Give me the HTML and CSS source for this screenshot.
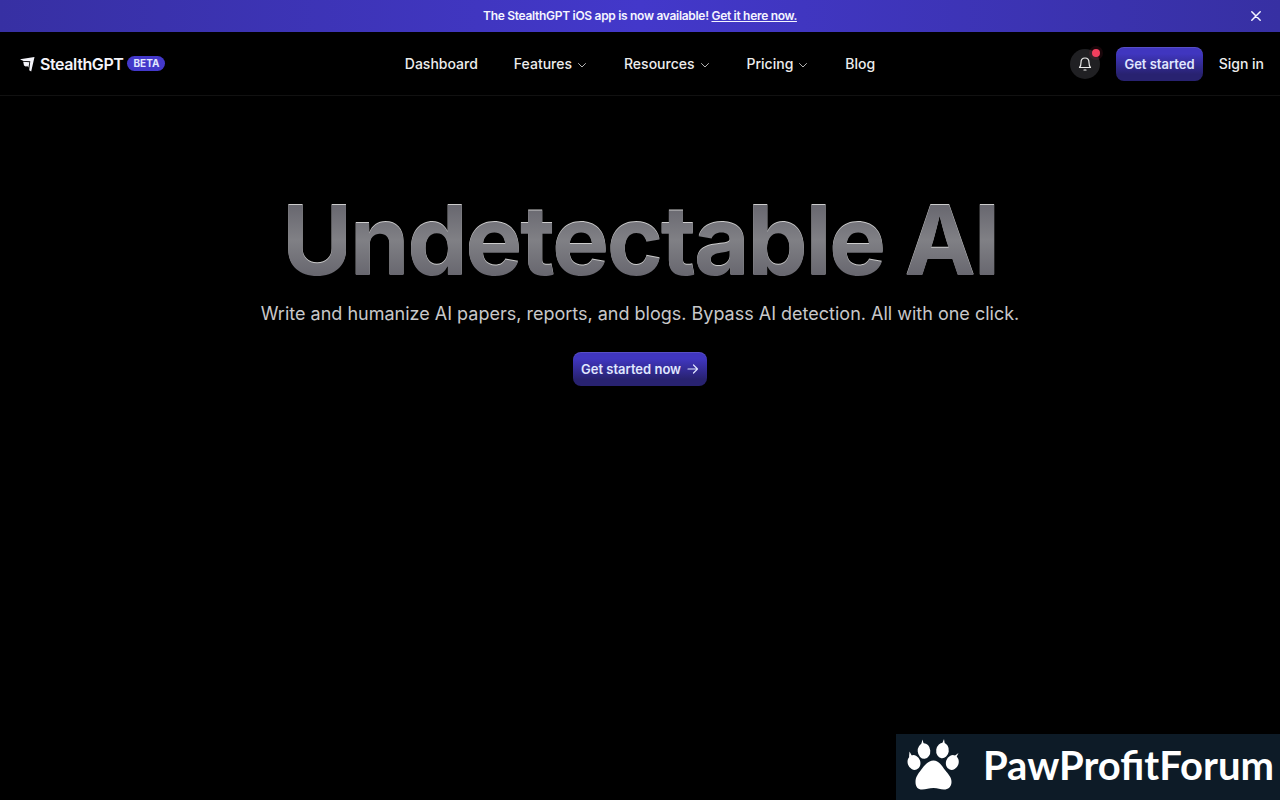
FILE: index.html
```html
<!DOCTYPE html>
<html lang="en">
<head>
    <meta charset="UTF-8" />
    <meta name="viewport" content="width=device-width, initial-scale=1.0" />
    <title>StealthGPT - Undetectable AI</title>
    <link rel="stylesheet" href="styles.css">
</head>
<body>
    <div class="banner">
        <p>The StealthGPT iOS app is now available! <a href="#">Get it here now.</a></p>
        <button type="button" class="banner-close" aria-label="Close">
            <svg width="10" height="10" viewBox="0 0 10 10" fill="none" stroke="currentColor" stroke-width="1.5" stroke-linecap="round"><path d="M0.800 0.800l8.400 8.400M9.200 0.800L0.800 9.200" /></svg>
        </button>
    </div>

    <header class="header">
        <a href="#" class="brand">
            <svg width="16" height="16" viewBox="0 0 16 16" fill="currentColor"><path d="M0 3.300L14.500 1L11.200 15.500L9.200 14.200L10.300 5.200L3.500 5Z" /><path d="M3.200 5.800L9.400 6.200L8.400 11.500L7 9.800L6.200 10.800L4 9.500Z" /></svg>
            <span class="brand-name">StealthGPT</span>
            <span class="beta">BETA</span>
        </a>

        <nav class="nav">
            <a href="#">Dashboard</a>
            <button type="button">Features
                <svg width="12" height="12" viewBox="0 0 12 12" fill="none" stroke="#b4b4b4" stroke-linecap="round" stroke-linejoin="round"><path d="M2.500 5.500L6 9L9.500 5.500" /></svg>
            </button>
            <button type="button">Resources
                <svg width="12" height="12" viewBox="0 0 12 12" fill="none" stroke="#b4b4b4" stroke-linecap="round" stroke-linejoin="round"><path d="M2.500 5.500L6 9L9.500 5.500" /></svg>
            </button>
            <button type="button">Pricing
                <svg width="12" height="12" viewBox="0 0 12 12" fill="none" stroke="#b4b4b4" stroke-linecap="round" stroke-linejoin="round"><path d="M2.500 5.500L6 9L9.500 5.500" /></svg>
            </button>
            <a href="#">Blog</a>
        </nav>

        <div class="actions">
            <button type="button" class="bell" aria-label="Notifications">
                <svg width="14" height="14" viewBox="0 0 14 14" fill="none" stroke="currentColor" stroke-width="1.2" stroke-linecap="round" stroke-linejoin="round"><path d="M1.500 10.500C2.800 9.400 3 8 3 5.500C3 2.800 4.600 1 7 1C9.400 1 11 2.800 11 5.500C11 8 11.200 9.400 12.500 10.500Z" /><path d="M6 13h2" /></svg>
                <span class="dot"></span>
            </button>
            <a href="#" class="btn">Get started</a>
            <a href="#" class="signin">Sign in</a>
        </div>
    </header>

    <main class="hero">
        <h1>Undetectable AI</h1>
        <p>Write and humanize AI papers, reports, and blogs. Bypass AI detection. All with one click.</p>
        <a href="#" class="btn">Get started now
            <svg width="12" height="12" viewBox="0 0 12 12" fill="none" stroke="currentColor" stroke-width="1.2" stroke-linecap="round" stroke-linejoin="round"><path d="M1 6h9.500M6.500 2l4 4l-4 4" /></svg>
        </a>
    </main>

    <div class="watermark">
        <svg width="52" height="52" viewBox="0 0 52 52" fill="#fff">
            <path d="M26.500 21.500C32 21.500 35 27 38 31C41 35 44.500 38 44.500 43C44.500 48 41 50.500 37 50.500C33 50.500 31 49 26.500 49C22 49 19 50.500 15 50.500C11 50.500 8.500 48 8.500 43C8.500 38 11 35 14 31C17 27 21 21.500 26.500 21.500Z" />
            <ellipse cx="7" cy="23.500" rx="6.300" ry="7.500" transform="rotate(-20 7 23.500)" />
            <ellipse cx="17" cy="12" rx="6.300" ry="7.800" transform="rotate(-5 17 12)" />
            <ellipse cx="35.500" cy="11.500" rx="6.300" ry="7.800" transform="rotate(8 35.500 11.500)" />
            <ellipse cx="45.300" cy="23.500" rx="6.300" ry="7.500" transform="rotate(20 45.300 23.500)" />
            <path d="M2 18L2.500 12.500L5 17ZM14 6L15.500 0.500L17 6ZM35 5L37 0L38 6ZM46 18L51.500 14L49 19Z" />
        </svg>
        <span>PawProfitForum</span>
    </div>
</body>
</html>
```

FILE: styles.css
```css
* {
    box-sizing: border-box;
}

body {
    margin: 0;
    min-height: 100vh;
    background-color: #000;
    color: #ededed;
    font-family: Inter, sans-serif;
    font-size: 14px;
}

a {
    color: inherit;
    text-decoration: none;
}

button {
    padding: 0;
    border: none;
    background: none;
    color: inherit;
    font: inherit;
    cursor: pointer;
}

.banner {
    display: grid;
    grid-template-columns: 1fr auto 1fr;
    align-items: center;
    height: 32px;
    padding: 0 16px;
    background: linear-gradient(90deg, #3730a3, #4338ca, #3730a3);
    color: #f4f4ff;
}

.banner p {
    grid-column: 2;
    margin: 0;
    font-size: 12px;
    font-weight: 600;
    line-height: 16px;
    letter-spacing: -0.025em;
}

.banner a {
    text-decoration: underline;
}

.banner-close {
    display: flex;
    justify-self: end;
    padding: 3px;
}

.header {
    display: grid;
    grid-template-columns: 1fr auto 1fr;
    align-items: center;
    height: 64px;
    padding: 0 16px;
    border-bottom: 1px solid #111;
}

.brand {
    display: flex;
    align-items: center;
    gap: 4px;
    padding-left: 4px;
    color: #f4f4fa;
}

.brand-name {
    font-size: 16px;
    font-weight: 600;
    letter-spacing: -0.025em;
}

.beta {
    padding: 0 6px;
    border-radius: 8px;
    background-color: #4338ca;
    color: #e0e7ff;
    font-size: 10px;
    font-weight: 700;
    line-height: 15px;
}

.nav {
    display: flex;
    align-items: center;
    gap: 36px;
    font-weight: 500;
}

.nav button {
    display: flex;
    align-items: center;
    gap: 4px;
}

.actions {
    display: flex;
    align-items: center;
    justify-content: flex-end;
    gap: 16px;
    font-weight: 500;
}

.bell {
    position: relative;
    display: flex;
    align-items: center;
    justify-content: center;
    width: 30px;
    height: 30px;
    border-radius: 50%;
    background-color: #202023;
}

.dot {
    position: absolute;
    top: 0;
    right: 0;
    width: 8px;
    height: 8px;
    border-radius: 50%;
    background-color: #f43f5e;
    box-shadow: 0 0 0 3px rgba(244, 63, 94, 0.1);
}

.btn {
    display: inline-flex;
    align-items: center;
    gap: 6px;
    height: 34px;
    padding: 0 8px;
    border-radius: 8px;
    background: linear-gradient(#4036bf 20%, #282270 80%);
    box-shadow: inset 0 1px 0 rgba(255, 255, 255, 0.12);
    color: #e0e7ff;
    font-size: 13px;
    font-weight: 600;
    line-height: 20px;
}

.hero {
    display: flex;
    flex-direction: column;
    align-items: center;
    padding: 96px 16px;
    text-align: center;
}

.hero h1 {
    margin: 0;
    background: linear-gradient(#5f5e67, #808085, #5f5e67);
    background-clip: text;
    -webkit-background-clip: text;
    color: transparent;
    filter: drop-shadow(0 -1px 0 rgba(255, 255, 255, 0.8));
    font-size: 96px;
    font-weight: 700;
    line-height: 96px;
    letter-spacing: -0.025em;
}

.hero p {
    margin: 12px 0 24px;
    color: #c8c8ca;
    font-size: 18px;
    line-height: 28px;
}

.watermark {
    position: fixed;
    right: 0;
    bottom: 0;
    display: flex;
    align-items: center;
    gap: 24px;
    height: 66px;
    padding: 0 6px 4px 11px;
    background-color: #0d1b27;
    color: #fff;
    font-family: Lato, sans-serif;
    font-size: 40px;
    font-weight: 700;
}
```
